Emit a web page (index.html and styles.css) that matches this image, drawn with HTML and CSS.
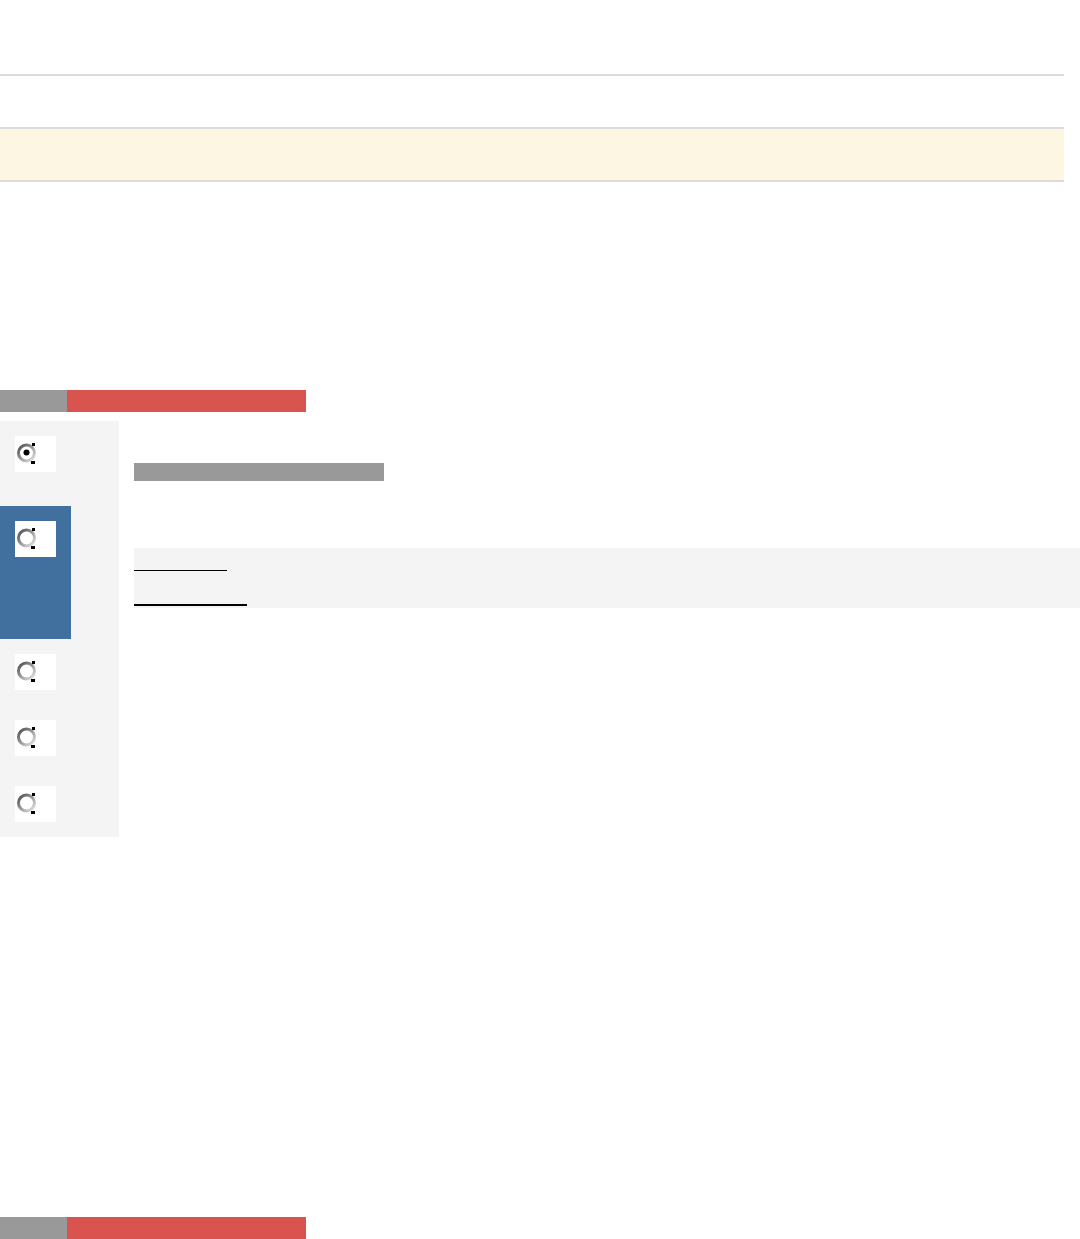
FILE: index.html
```html
<!DOCTYPE html>
<html lang="en">
<head>
  <meta charset="UTF-8">
  <title>Options</title>
  <meta name="viewport" content="width=device-width, initial-scale=1.0">
  <link rel="stylesheet" href="styles.css">
</head>
<body>
  <svg class="defs" width="0" height="0">
    <defs>
      <linearGradient id="ring" x1="0" y1="0" x2="1" y2="1">
        <stop offset="0" stop-color="#4a4a4a"/>
        <stop offset="0.4" stop-color="#8c8c8c"/>
        <stop offset="1" stop-color="#e8e8e8"/>
      </linearGradient>
    </defs>
  </svg>

  <div class="top"></div>
  <div class="rule"></div>
  <div class="notice"></div>

  <div class="tabs">
    <span class="tab tab-muted"></span>
    <span class="tab tab-active"></span>
  </div>

  <div class="main">
    <div class="sidebar">
      <div class="item item-first">
        <span class="radio-box">
          <svg class="radio" width="20" height="22" viewBox="0 0 20 22">
            <circle cx="9.5" cy="10" r="8" fill="#fff" stroke="url(#ring)" stroke-width="3"/>
            <circle cx="9.5" cy="9.5" r="3" fill="#000"/>
            <rect x="15" y="0" width="3" height="3" fill="#000"/>
            <rect x="14" y="18" width="4" height="3" fill="#000"/>
          </svg>
        </span>
      </div>
      <div class="item item-current">
        <span class="radio-box">
          <svg class="radio" width="20" height="22" viewBox="0 0 20 22">
            <circle cx="9.5" cy="10" r="8" fill="#fff" stroke="url(#ring)" stroke-width="3"/>
            <rect x="15" y="0" width="3" height="3" fill="#000"/>
            <rect x="14" y="18" width="4" height="3" fill="#000"/>
          </svg>
        </span>
      </div>
      <div class="item">
        <span class="radio-box">
          <svg class="radio" width="20" height="22" viewBox="0 0 20 22">
            <circle cx="9.5" cy="10" r="8" fill="#fff" stroke="url(#ring)" stroke-width="3"/>
            <rect x="15" y="0" width="3" height="3" fill="#000"/>
            <rect x="14" y="18" width="4" height="3" fill="#000"/>
          </svg>
        </span>
      </div>
      <div class="item">
        <span class="radio-box">
          <svg class="radio" width="20" height="22" viewBox="0 0 20 22">
            <circle cx="9.5" cy="10" r="8" fill="#fff" stroke="url(#ring)" stroke-width="3"/>
            <rect x="15" y="0" width="3" height="3" fill="#000"/>
            <rect x="14" y="18" width="4" height="3" fill="#000"/>
          </svg>
        </span>
      </div>
      <div class="item">
        <span class="radio-box">
          <svg class="radio" width="20" height="22" viewBox="0 0 20 22">
            <circle cx="9.5" cy="10" r="8" fill="#fff" stroke="url(#ring)" stroke-width="3"/>
            <rect x="15" y="0" width="3" height="3" fill="#000"/>
            <rect x="14" y="18" width="4" height="3" fill="#000"/>
          </svg>
        </span>
      </div>
    </div>

    <div class="content">
      <div class="title-bar"></div>
      <div class="links">
        <span class="link link-thin"></span>
        <span class="link link-thick"></span>
      </div>
    </div>
  </div>

  <div class="tabs tabs-bottom">
    <span class="tab tab-muted"></span>
    <span class="tab tab-active"></span>
  </div>
</body>
</html>
```

FILE: styles.css
```css
body {
  margin: 0;
  background: #fff;
  font-family: "Liberation Sans", Arial, sans-serif;
  overflow: hidden;
}
.defs {
  position: absolute;
}
.top {
  height: 74px;
}
.rule {
  width: 1064px;
  border-top: 2px solid #dcdcdc;
  margin-bottom: 51px;
}
.notice {
  width: 1064px;
  height: 51px;
  background: #fdf6e3;
  border-top: 2px solid #dcdcdc;
  border-bottom: 2px solid #dcdcdc;
  margin-bottom: 208px;
}
.tabs {
  display: flex;
  height: 22px;
  margin-bottom: 9px;
}
.tab {
  display: block;
  height: 22px;
}
.tab-muted {
  width: 67px;
  background: #999;
}
.tab-active {
  width: 239px;
  background: #d9534f;
}
.tabs-bottom {
  margin-top: 380px;
}
.main {
  display: flex;
}
.sidebar {
  width: 119px;
  background: #f4f4f4;
}
.item {
  height: 66px;
  padding: 15px 0 0 15px;
  box-sizing: border-box;
}
.item-first {
  height: 85px;
}
.item-current {
  width: 71px;
  height: 133px;
  background: #41709f;
}
.radio-box {
  display: block;
  width: 41px;
  height: 36px;
  background: #fff;
  padding: 7px 0 0 2px;
  box-sizing: border-box;
}
.radio {
  display: block;
}
.content {
  flex: 1;
  padding-left: 15px;
  padding-top: 42px;
}
.title-bar {
  width: 250px;
  height: 18px;
  background: #999;
  margin-bottom: 67px;
}
.links {
  background: #f4f4f4;
  height: 60px;
  display: flex;
  flex-direction: column;
  align-items: flex-start;
  padding-top: 22px;
  box-sizing: border-box;
}
.link {
  display: block;
}
.link-thin {
  width: 93px;
  border-top: 1px solid #000;
  margin-bottom: 33px;
}
.link-thick {
  width: 113px;
  border-top: 2px solid #000;
}
```
